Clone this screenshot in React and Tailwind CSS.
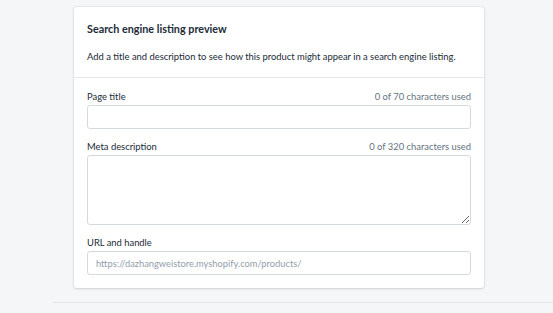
import React from "react";

const Field = ({ label, count, children }) => (
  <div>
    <div className="flex justify-between items-center h-[14px] text-[9.4px] leading-[14px]">
      <span className="text-[#212b36]">{label}</span>
      {count && <span className="text-[#637381]">{count}</span>}
    </div>
    <div className="mt-[1px]">{children}</div>
  </div>
);

const App = () => {
  return (
    <div
      className="w-[553px] h-[313px] bg-[#f4f6f8] overflow-hidden pt-[7px]"
      style={{ fontFamily: 'Lato, "Noto Sans", sans-serif' }}
    >
      {/* Card */}
      <div className="ml-[74px] w-[410px] bg-white rounded-[3px] shadow-[0_0_0_1px_rgba(63,63,68,0.05),0_1px_3px_0_rgba(63,63,68,0.15)]">
        <div className="px-[13px] pt-[14px] pb-[12px] border-b border-[#e6e9ec]">
          <h2 className="text-[10.8px] leading-[16px] font-bold text-[#212b36]">
            Search engine listing preview
          </h2>
          <p className="mt-[12px] text-[9.4px] leading-[16px] text-[#212b36] whitespace-nowrap">
            Add a title and description to see how this product might appear in a search engine listing.
          </p>
        </div>

        <div className="px-[13px] pt-[12px] pb-[13px] flex flex-col gap-[11px]">
          <Field label="Page title" count="0 of 70 characters used">
            <input className="block w-full h-[24px] rounded-[3px] border border-[#d3dae1] bg-white outline-none" />
          </Field>
          <Field label="Meta description" count="0 of 320 characters used">
            <textarea className="block w-full h-[70px] rounded-[3px] border border-[#d3dae1] bg-white outline-none resize-y" />
          </Field>
          <Field label="URL and handle">
            <input
              className="block w-full h-[24px] mt-[1px] px-[8px] rounded-[3px] border border-[#d3dae1] bg-white text-[9.3px] outline-none placeholder:text-[#919eab]"
              placeholder="https://dazhangweistore.myshopify.com/products/"
            />
          </Field>
        </div>
      </div>

      <div className="ml-[53px] mt-[14px] border-t border-[#e3e6e9]" />
    </div>
  );
};

export default App;
